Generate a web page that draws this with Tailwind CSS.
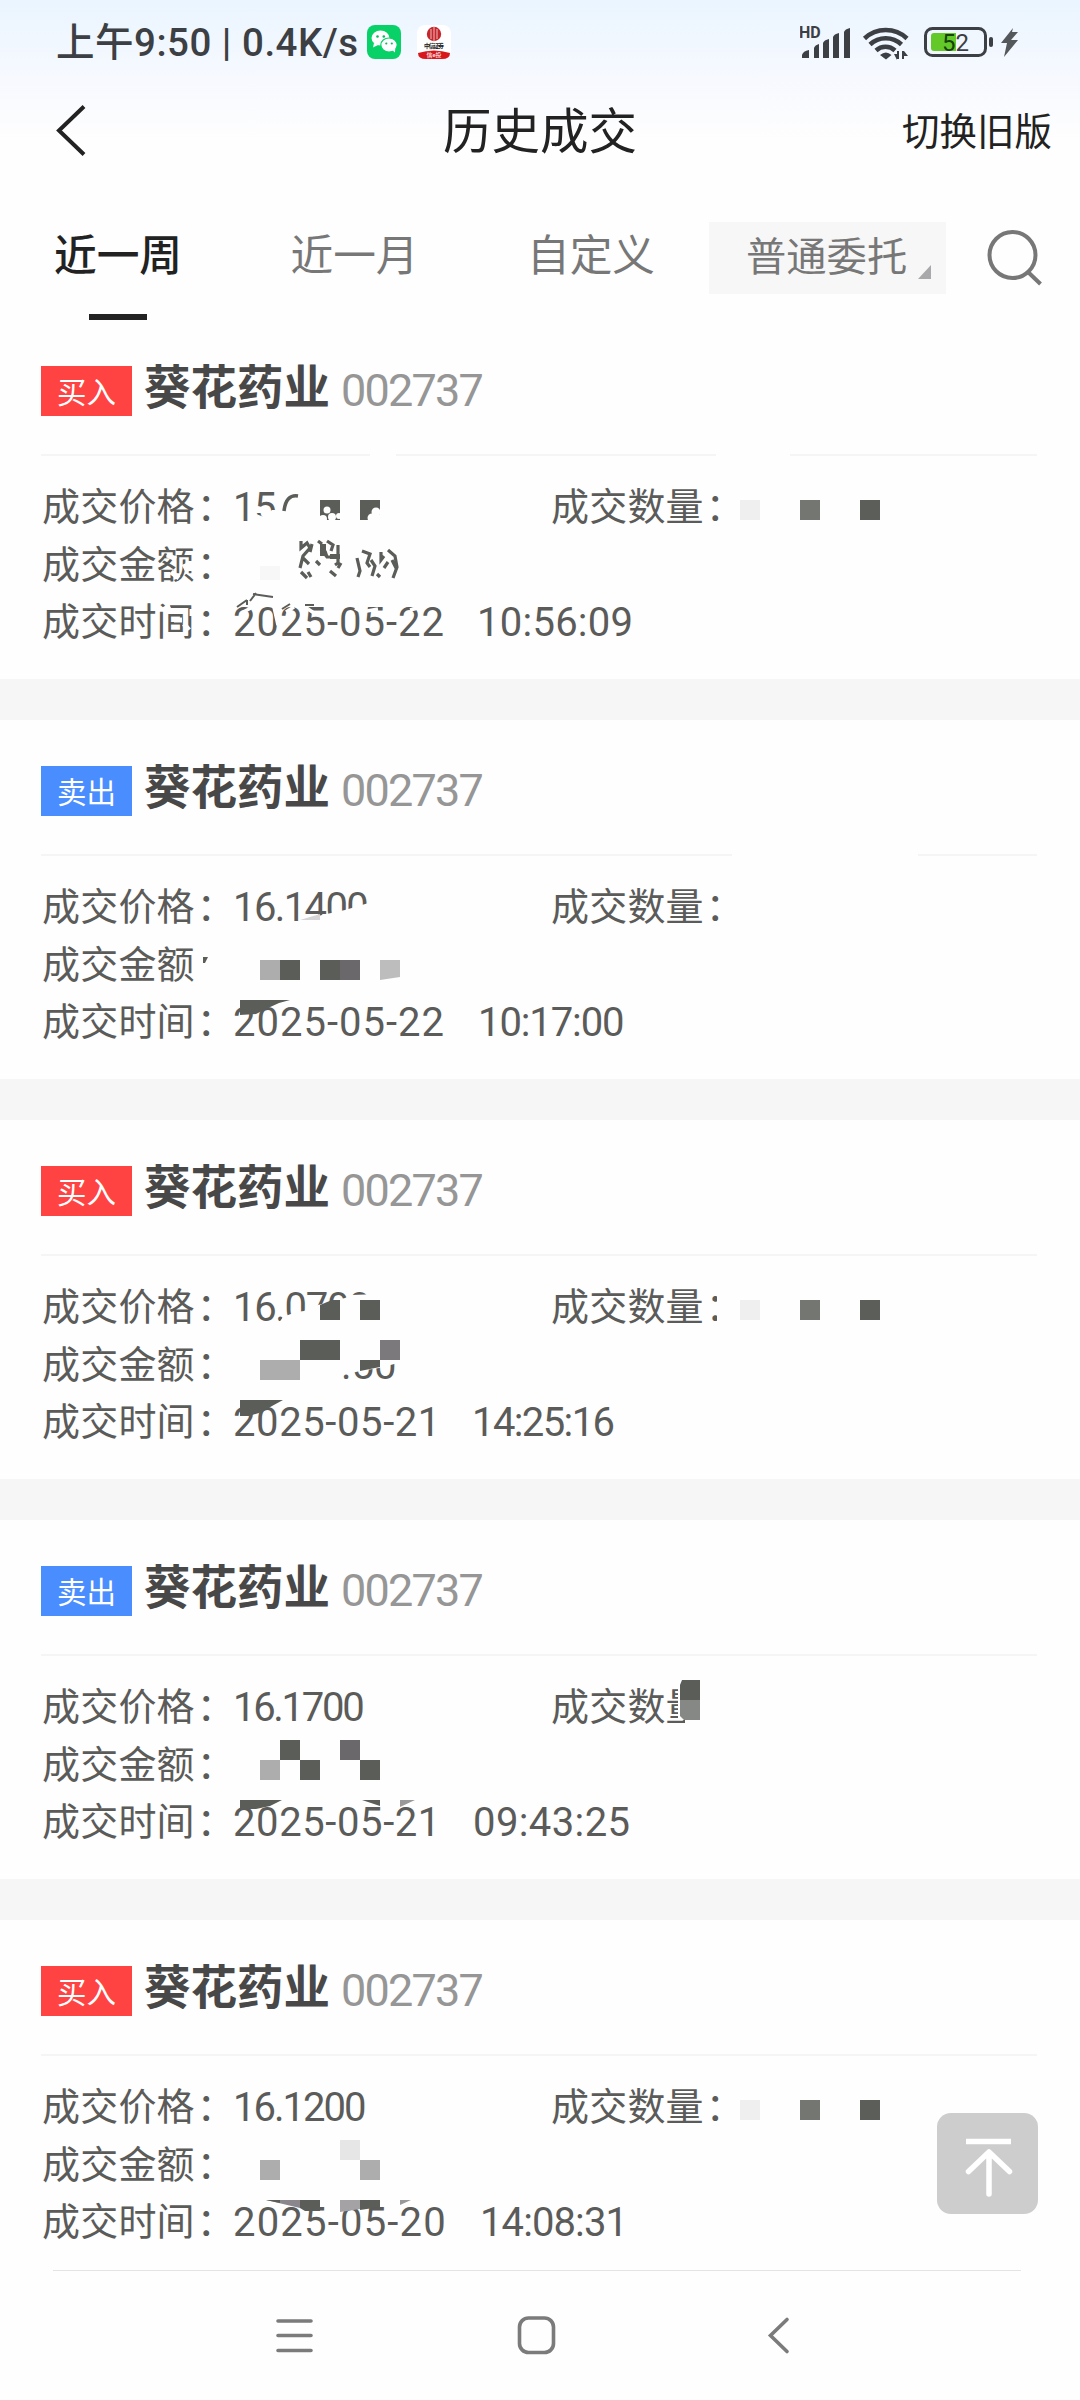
<!DOCTYPE html>
<html lang="zh-CN">
<head>
<meta charset="utf-8">
<title>历史成交</title>
<script src="https://cdn.jsdelivr.net/npm/@tailwindcss/browser@4"></script>
</head>
<body class="bg-white font-['Roboto','Noto_Sans_CJK_SC',sans-serif]">
<div class="relative flex h-[2400px] w-[1080px] flex-col overflow-hidden bg-[#fefefe]">
  <div class="flex h-[200px] flex-col bg-linear-to-b from-[#eaf5ff] via-[#f7f9ff] via-40% to-[#fefefe] to-70%">
    <!-- status bar -->
    <div class="flex h-[84px] items-center pl-[56px] text-[#3c3f43]">
      <div class="w-[311px] pt-[2px] whitespace-pre text-[38.500px] leading-[80px] tracking-[0.5px] font-medium">上午9:50 | 0.4K/s</div>
      <svg class="h-[34px] w-[34px]" viewBox="0 0 34 34"><rect width="34" height="34" rx="8" fill="#07d167"/><ellipse cx="13.5" cy="13" rx="9" ry="7.6" fill="#fff"/><path d="M7 18l-1 4.5 5-2.5z" fill="#fff"/><ellipse cx="22" cy="20" rx="8.2" ry="7" fill="#fff" stroke="#07d167" stroke-width="1.2"/><path d="M25 25l3 2.5.3-5z" fill="#fff"/><g fill="#07b95c"><circle cx="10.5" cy="11.5" r="1.3"/><circle cx="16.8" cy="11.5" r="1.3"/><circle cx="19.3" cy="18.5" r="1.1"/><circle cx="24.8" cy="18.5" r="1.1"/></g></svg>
      <svg class="ml-4 h-[34px] w-[34px]" viewBox="0 0 34 34"><rect width="34" height="34" rx="8" fill="#fff"/><circle cx="17" cy="9" r="7.2" fill="#c5262b"/><path d="M14 4v10M17 2v14M20 4v10" stroke="#fff" stroke-width=".7"/><path d="M1 28q16-5 32 0 0 6-8 6H9q-8 0-8-6z" fill="#d8171c"/><text x="17" y="23" font-size="6" text-anchor="middle" font-weight="700" fill="#222" textLength="20">中信证券</text><text x="17" y="32" font-size="6" text-anchor="middle" fill="#fff">信e投</text></svg>
      <svg class="ml-[349px] h-[36px] w-[220px]" viewBox="800 24 220 36">
        <text x="799" y="38" font-size="16" font-weight="700" fill="#3c3f43">HD</text>
        <g fill="#3c3f43"><path d="M802 58v-3q1-4 7-5v8zM814 58V48q1-3 5-4v14zM823 58V43q1-3 6-4v19zM833 58V37q1-3 6-4v25zM844 58V32q1-3 6-4v30z"/></g>
        <g fill="none" stroke="#3c3f43" stroke-width="4.5"><path d="M864.500 38.500a31 31 0 0 1 42.500 0"/><path d="M870 44.500a23 23 0 0 1 31.500 0"/><path d="M876 50.500a14 14 0 0 1 19 0"/></g>
        <path d="M880 55q6-5 11.500 0l-5.500 4.500zM894 54h3v6zM897 51h2v8h-2zM902 51h2v8h-2zM904 51l4 5h-4z" fill="#3c3f43"/>
        <rect x="925.500" y="28.500" width="60" height="27" rx="7" fill="none" stroke="#3c3f43" stroke-width="3"/>
        <rect x="989" y="37" width="4" height="10" rx="2" fill="#3c3f43"/>
        <path d="M934 33h22v18h-22q-3 0-3-3V36q0-3 3-3z" fill="#62c928"/>
        <text x="942" y="50.500" font-size="24" fill="#3c3f43"><tspan fill="#15430a">5</tspan>2</text>
        <path d="M1013 28l-12 15h6l-3 14 14-17h-7l7-8h-6z" fill="#55585a"/>
      </svg>
    </div>
    <!-- title bar -->
    <div class="grid h-[92px] grid-cols-3 items-center pr-[28px] text-[#222]">
      <svg class="ml-[52px] h-[56px] w-[36px]" viewBox="52 102 36 56"><path d="M84 106.500L59 130.500 84 154.500" fill="none" stroke="#222" stroke-width="4"/></svg>
      <h1 class="whitespace-nowrap pt-[5px] pl-[28px] text-center text-[48.500px] leading-[84px]">历史成交</h1>
      <div class="pt-[3px] text-right text-[37.500px] leading-[84px]">切换旧版</div>
    </div>
  </div>
  <!-- tabs -->
  <div class="flex h-[120px] text-[42.700px] leading-[112px] text-[#777]">
    <div class="flex w-[236px] flex-col items-center text-[#222]">
      <div class="h-[114px] font-medium">近一周</div>
      <div class="h-[6px] w-[58px] bg-[#222]"></div>
    </div>
    <div class="w-[237px] text-center">近一月</div>
    <div class="w-[236px] text-center">自定义</div>
    <div class="relative mt-[22px] h-[72px] w-[237px] bg-[#f7f7f7] pl-[37px] text-[40.300px] leading-[71px]">普通委托
      <svg class="absolute right-[15px] bottom-[15px] h-[14px] w-[13px]" viewBox="0 0 13 14"><path d="M13 0v14H0z" fill="#a9a9ab"/></svg>
    </div>
    <svg class="mt-[28px] ml-[39px] h-[60px] w-[60px]" viewBox="985 228 60 60"><g fill="none" stroke="#777" stroke-width="4"><circle cx="1012.500" cy="255" r="23"/><path d="M1028 272l12.500 12"/></g></svg>
  </div>
  <div id="list" class="flex h-[1950px] flex-col"></div>
  <!-- navigation bar -->
  <div class="mr-[59px] ml-[53px] h-px bg-[#e4e4e4]"></div>
  <div class="flex h-[129px] items-start pt-[43px]">
    <svg class="ml-[274px] h-[42px] w-[42px]" viewBox="274 2314 42 42"><path d="M278 2321h33M278 2335.500h33M278 2350.500h33" stroke="#7b7b7b" stroke-width="3.600" stroke-linecap="round"/></svg>
    <svg class="ml-[199px] h-[42px] w-[42px]" viewBox="515 2314 42 42"><rect x="519.500" y="2318" width="34" height="34.500" rx="9" fill="none" stroke="#7b7b7b" stroke-width="3.600"/></svg>
    <svg class="ml-[208px] h-[42px] w-[30px]" viewBox="765 2314 30 42"><path d="M787 2319.500l-16.500 16 16.500 16" fill="none" stroke="#7b7b7b" stroke-width="3.600" stroke-linecap="round"/></svg>
  </div>
  <!-- back to top -->
  <button class="absolute top-[2113px] left-[937px] h-[101px] w-[101px] rounded-[14px] bg-[#cdcdcd]" aria-label="回到顶部">
    <svg class="h-full w-full" viewBox="0 0 101 101" fill="none" stroke="#fff" stroke-width="5.500"><path d="M29 28.500h45"/><path d="M52 81V40M31.500 58.500L52 39l20.500 19.500" stroke-linecap="round" stroke-linejoin="round"/></svg>
  </button>
</div>
<script>
const D = '#5b5d59';
const r = (x, y, w, h, c) => `<rect x="${x}" y="${y}" width="${w}" height="${h}" fill="${c}"/>`;
const p = (pts, c) => `<polygon points="${pts}" fill="${c}"/>`;
const W = '#fefefe';
const label = t => `<span class="flex whitespace-nowrap tracking-[0.2px]">${t}<span class="ml-[2px] w-0">：</span></span>`;
const qty = r(740,180,20,20,'#efefef') + r(800,180,20,20,'#747672') + r(860,180,20,20,'#5c5e5a');
// Masks that hide the private figures; coordinates are relative to each card.
const cards = [
  { buy: true, price: '15.', ps: 'tracking-[-1.4px]', amt: '', date: '2025-05-22', ds: 'tracking-[1px]', time: '10:56:09', ts: 'tracking-[0.25px]', tx: 'pl-[8px]',
    mask: r(370,134,26,2,W) + r(716,134,74,2,W) + p('252,204 256,194 264,197 272,190 290,190 290,208 252,208',W) + `<path d="M284 191q2-17 14-15" fill="none" stroke="${D}" stroke-width="3.500"/>` +
      r(320,180,20,20,D) + r(360,180,20,20,D) + `<g fill="${W}"><circle cx="327" cy="190" r="3.5"/><circle cx="323" cy="199" r="4"/><circle cx="332" cy="197" r="4"/><circle cx="339" cy="196" r="3"/><circle cx="376" cy="192" r="4.500"/><circle cx="372" cy="198" r="4.500"/><circle cx="378" cy="198" r="4"/></g>` +
      `<g stroke="${D}" fill="none" stroke-width="3.200"><path d="M301 221v7l6-5 3 5-7 8-3 12M303 238l6 6M312 224l-2 8M318 221l4 3M327 221l6 4-2 6M321 229l6 8h8M338 225v18l-3 2M325 231l2 6M301 252l6 6M308 252l3 5M330 251l6 5M316 241l4 4M341 243l-3 5M357 238l3 13-2 6M362 231l8 3-3 9 3 4M371 240l4 6-3 10M381 232v8l3-4M388 230l7 6 2 11-4 11M384 248l4-6M377 254l3 3M392 240l4 8"/></g>` + r(320,224,6,12,D) + r(330,234,10,5,D) + r(260,246,20,14,'#f7f7f7') +
      `<g stroke="${W}" fill="none" stroke-width="5"><path d="M167 235l9 4M184 244l3 6M171 252l8 6M190 241v10M163 290l7-4M184 304l5 6M192 289v7M174 300h8"/></g>` +
      `<path d="M237 287l10-7M247 280v5M256 273l-6 8M253 274l20 3M282 289l8-5M305 285h9" stroke="${D}" stroke-width="2" fill="none"/>` +
      `<path d="M243 292l8-4M274 287l4 18M286 292l8-5M308 289l6 4M355 288l7 4 16-3M410 290l8-2" stroke="${W}" stroke-width="3.500" fill="none"/>` + qty },
  { buy: false, price: '16.1400', ps: 'tracking-[-1.6px]', amt: '', date: '2025-05-22', ds: 'tracking-[1px]', time: '10:17:00', ts: 'tracking-[-1.1px]', tx: 'pl-[9px]',
    mask: r(732,134,186,2,W) + p('300,204 308,199 322,195 345,190 372,182 372,208 300,208',W) + p('300,200 320,194 320,200','#d5d5d5') + r(200,230,14,34,W) + p('203,237 208,237 205,243 203,243',D) +
      r(260,240,20,20,'#adadad') + r(280,240,20,20,D) + r(320,240,20,20,D) + r(340,240,20,20,'#6b686c') + p('380,240 400,240 400,257 380,260','#bdbdbd') +
      p('240,280 290,280 279,283 268,288 256,294 240,295',D) },
  { buy: true, price: '16.0700', ps: 'tracking-[-1.3px]', amt: '.50', date: '2025-05-21', ds: 'tracking-[0.6px]', time: '14:25:16', ts: 'tracking-[-1.6px]', tx: 'pl-[3px]',
    mask: p('276,207 283,197 296,192 304,191 318,185 345,178 351,175 380,174 380,210 276,210',W) + p('320,185 332,180 340,180 340,200 320,200',D) + r(360,180,20,20,D) +
      p('341,218 402,218 402,242 379,248 360,251 352,253 341,253',W) + r(300,220,40,20,D) + r(260,240,40,20,'#adadad') + r(380,220,20,20,'#7c797d') + p('360,240 380,240 380,247 360,251',D) +
      p('240,280 283,280 272,286 262,292 249,296 240,296',D) + r(717,176,4,26,W) + qty },
  { buy: false, price: '16.1700', ps: 'tracking-[-2.3px]', amt: '', date: '2025-05-21', ds: 'tracking-[0.6px]', time: '09:43:25', ts: 'tracking-[0.4px]', tx: 'pl-[4px]',
    mask: r(678,160,50,40,W) + r(685,198,42,10,W) + p('682,160 700,160 700,180 680,180 680,165',D) + p('680,180 700,180 700,200 684,200 680,196','#868885') + r(280,220,20,20,D) + r(340,220,20,20,'#6b686c') + r(260,240,20,20,'#adadad') + r(300,240,20,20,D) + r(360,240,20,20,D) +
      p('240,280 282,280 270,286 256,289 240,289',D) + p('362,280 380,280 380,286',D) + p('400,280 415,280 400,287','#999') },
  { buy: true, price: '16.1200', ps: 'tracking-[-2px]', amt: '', date: '2025-05-20', ds: 'tracking-[1.2px]', time: '14:08:31', ts: 'tracking-[-0.9px]', tx: 'pl-[11px]',
    mask: r(340,220,20,20,'#e6e6e6') + r(260,240,20,20,'#adadad') + r(360,240,20,20,'#adadad') + p('266,280 300,280 300,288','#8a868b') + p('266,280 280,280 280,283',D) + p('300,280 320,280 320,291 305,291 300,288',D) + p('340,280 360,280 360,289 340,292','#a5a2a6') + p('360,280 380,280 380,287 360,290',D) + p('400,280 411,280 400,285','#999') + qty },
];
document.getElementById('list').innerHTML = cards.map((c, i) => `
  <section class="relative shrink-0 ${i < 4 ? 'h-[400px] border-b-[41px] border-[#f6f6f6]' : 'h-[350px]'} pt-[46px] pl-[41px]">
    <div class="flex h-[88px]">
      <span class="h-[50px] w-[91px] text-center text-[29.500px] leading-[54px] text-white ${c.buy ? 'bg-[#ff4343]' : 'bg-[#4a8dff]'}">${c.buy ? '买入' : '卖出'}</span>
      <span class="ml-[12px] text-[46.500px] leading-[45px] font-bold text-[#484848]">葵花药业</span>
      <span class="ml-[11px] text-[45px] leading-[49px] tracking-[-1.8px] text-[#969696]">002737</span>
    </div>
    <div class="mr-[43px] h-[2px] bg-[#f5f5f5]"></div>
    <div class="grid grid-cols-[191px_318px_1fr] auto-rows-[57.500px] pt-[23px] pl-[1px] text-[38px] leading-[57.500px] text-[#5b5b5a]">
      ${label('成交价格')}<span class="text-[40px] ${c.ps}">${c.price}</span>${label('成交数量')}
      ${label('成交金额')}<span class="col-span-2 pl-[108px] text-[40px]">${c.amt}</span>
      ${label('成交时间')}<span class="col-span-2 flex text-[40px]"><span class="w-[236px] ${c.ds}">${c.date}</span><span class="${c.tx} ${c.ts}">${c.time}</span></span>
    </div>
    <svg class="absolute top-0 left-0 h-[350px] w-[1080px]" viewBox="0 0 1080 350">${c.mask}</svg>
  </section>`).join('');
</script>
</body>
</html>
